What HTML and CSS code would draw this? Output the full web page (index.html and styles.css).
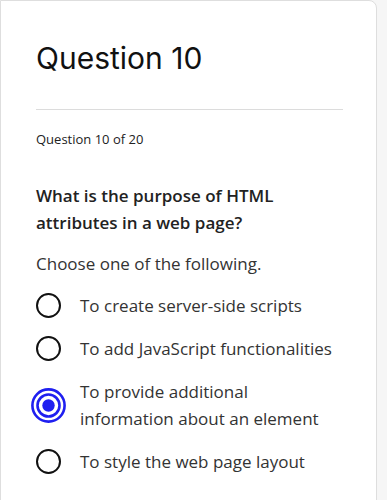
FILE: index.html
```html
<!DOCTYPE html>
<html lang="en">
<head>
  <meta charset="UTF-8" />
  <meta name="viewport" content="width=device-width, initial-scale=1.0" />
  <title>Question 10</title>
  <link rel="stylesheet" href="styles.css">
</head>
<body>
  <div class="card">
    <h1 class="title">Question 10</h1>
    <hr class="divider">
    <p class="progress">Question 10 of 20</p>

    <h2 class="question">What is the purpose of HTML attributes in a web page?</h2>
    <p class="hint">Choose one of the following.</p>

    <div class="options">
      <label class="option">
        <span class="radio"></span>
        <span class="option-text">To create server-side scripts</span>
      </label>
      <label class="option">
        <span class="radio"></span>
        <span class="option-text">To add JavaScript functionalities</span>
      </label>
      <label class="option selected">
        <span class="radio">
          <svg width="35" height="35" viewBox="0 0 35 35">
            <circle cx="17.5" cy="17.5" r="16.1" fill="none" stroke="#1f1ff0" stroke-width="2.6"/>
            <circle cx="17.5" cy="17.5" r="11" fill="none" stroke="#1f1ff0" stroke-width="2.6"/>
            <circle cx="17.5" cy="17.5" r="6.2" fill="#1f1ff0"/>
          </svg>
        </span>
        <span class="option-text">To provide additional information about an element</span>
      </label>
      <label class="option">
        <span class="radio"></span>
        <span class="option-text">To style the web page layout</span>
      </label>
    </div>
  </div>
</body>
</html>
```

FILE: styles.css
```css
body {
  margin: 0;
  background: #f6f6f6;
  font-family: 'Open Sans', sans-serif;
  color: #222;
}

.card {
  width: 377px;
  min-height: 520px;
  background: white;
  border: 1px solid #dedede;
  border-radius: 0 8px 0 0;
  padding: 40px 0 0 35px;
  box-sizing: border-box;
}

.title {
  font-family: 'Inter', sans-serif;
  font-weight: 400;
  font-size: 30px;
  line-height: 34px;
  margin: 0;
  color: #111;
}

.divider {
  width: 307px;
  margin: 34px 0 0;
  border: none;
  border-top: 1px solid #dcdcdc;
}

.progress {
  font-size: 13px;
  line-height: 18px;
  margin: 20px 0 0;
  color: #222;
}

.question {
  font-size: 17px;
  font-weight: 600;
  line-height: 27px;
  margin: 34px 0 0;
  width: 300px;
  color: #222;
}

.hint {
  font-size: 17px;
  line-height: 27px;
  margin: 14px 0 0;
  color: #333;
}

.options {
  display: flex;
  flex-direction: column;
  gap: 16px;
  margin-top: 15px;
}

.option {
  display: flex;
  align-items: center;
  gap: 19px;
}

.radio {
  width: 25px;
  height: 25px;
  flex: none;
  display: flex;
  align-items: center;
  justify-content: center;
  border: 2px solid #111;
  border-radius: 50%;
  box-sizing: border-box;
}

.selected .radio {
  width: 35px;
  height: 35px;
  margin: 0 -5px;
  border: none;
}

.option-text {
  font-size: 17px;
  line-height: 27px;
  color: #333;
  width: 256px;
}
```
